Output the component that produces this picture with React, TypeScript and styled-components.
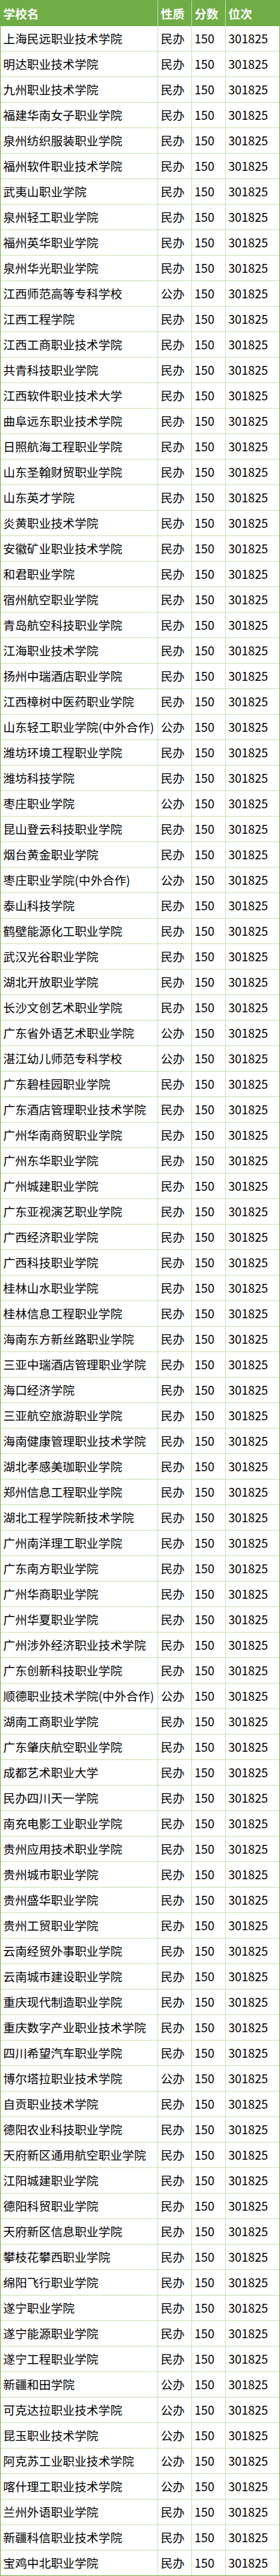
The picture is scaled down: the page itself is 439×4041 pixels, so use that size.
import React from "react";
import styled, { createGlobalStyle } from "styled-components";

const GlobalStyle = createGlobalStyle`
  html, body {
    margin: 0;
    padding: 0;
    background: #fff;
  }
  body {
    font-family: "Noto Sans CJK SC", "Noto Sans", sans-serif;
  }
`;

// 학교명 / 성질 목록 (점수, 순위는 모두 동일)
const SCHOOLS: [string, string][] = [
  ["上海民远职业技术学院", "民办"],
  ["明达职业技术学院", "民办"],
  ["九州职业技术学院", "民办"],
  ["福建华南女子职业学院", "民办"],
  ["泉州纺织服装职业学院", "民办"],
  ["福州软件职业技术学院", "民办"],
  ["武夷山职业学院", "民办"],
  ["泉州轻工职业学院", "民办"],
  ["福州英华职业学院", "民办"],
  ["泉州华光职业学院", "民办"],
  ["江西师范高等专科学校", "公办"],
  ["江西工程学院", "民办"],
  ["江西工商职业技术学院", "民办"],
  ["共青科技职业学院", "民办"],
  ["江西软件职业技术大学", "民办"],
  ["曲阜远东职业技术学院", "民办"],
  ["日照航海工程职业学院", "民办"],
  ["山东圣翰财贸职业学院", "民办"],
  ["山东英才学院", "民办"],
  ["炎黄职业技术学院", "民办"],
  ["安徽矿业职业技术学院", "民办"],
  ["和君职业学院", "民办"],
  ["宿州航空职业学院", "民办"],
  ["青岛航空科技职业学院", "民办"],
  ["江海职业技术学院", "民办"],
  ["扬州中瑞酒店职业学院", "民办"],
  ["江西樟树中医药职业学院", "民办"],
  ["山东轻工职业学院(中外合作)", "公办"],
  ["潍坊环境工程职业学院", "民办"],
  ["潍坊科技学院", "民办"],
  ["枣庄职业学院", "公办"],
  ["昆山登云科技职业学院", "民办"],
  ["烟台黄金职业学院", "民办"],
  ["枣庄职业学院(中外合作)", "公办"],
  ["泰山科技学院", "民办"],
  ["鹤壁能源化工职业学院", "民办"],
  ["武汉光谷职业学院", "民办"],
  ["湖北开放职业学院", "民办"],
  ["长沙文创艺术职业学院", "民办"],
  ["广东省外语艺术职业学院", "公办"],
  ["湛江幼儿师范专科学校", "公办"],
  ["广东碧桂园职业学院", "民办"],
  ["广东酒店管理职业技术学院", "民办"],
  ["广州华南商贸职业学院", "民办"],
  ["广州东华职业学院", "民办"],
  ["广州城建职业学院", "民办"],
  ["广东亚视演艺职业学院", "民办"],
  ["广西经济职业学院", "民办"],
  ["广西科技职业学院", "民办"],
  ["桂林山水职业学院", "民办"],
  ["桂林信息工程职业学院", "民办"],
  ["海南东方新丝路职业学院", "民办"],
  ["三亚中瑞酒店管理职业学院", "民办"],
  ["海口经济学院", "民办"],
  ["三亚航空旅游职业学院", "民办"],
  ["海南健康管理职业技术学院", "民办"],
  ["湖北孝感美珈职业学院", "民办"],
  ["郑州信息工程职业学院", "民办"],
  ["湖北工程学院新技术学院", "民办"],
  ["广州南洋理工职业学院", "民办"],
  ["广东南方职业学院", "民办"],
  ["广州华商职业学院", "民办"],
  ["广州华夏职业学院", "民办"],
  ["广州涉外经济职业技术学院", "民办"],
  ["广东创新科技职业学院", "民办"],
  ["顺德职业技术学院(中外合作)", "公办"],
  ["湖南工商职业学院", "民办"],
  ["广东肇庆航空职业学院", "民办"],
  ["成都艺术职业大学", "民办"],
  ["民办四川天一学院", "民办"],
  ["南充电影工业职业学院", "民办"],
  ["贵州应用技术职业学院", "民办"],
  ["贵州城市职业学院", "民办"],
  ["贵州盛华职业学院", "民办"],
  ["贵州工贸职业学院", "民办"],
  ["云南经贸外事职业学院", "民办"],
  ["云南城市建设职业学院", "民办"],
  ["重庆现代制造职业学院", "民办"],
  ["重庆数字产业职业技术学院", "民办"],
  ["四川希望汽车职业学院", "民办"],
  ["博尔塔拉职业技术学院", "公办"],
  ["自贡职业技术学院", "民办"],
  ["德阳农业科技职业学院", "民办"],
  ["天府新区通用航空职业学院", "民办"],
  ["江阳城建职业学院", "民办"],
  ["德阳科贸职业学院", "民办"],
  ["天府新区信息职业学院", "民办"],
  ["攀枝花攀西职业学院", "民办"],
  ["绵阳飞行职业学院", "民办"],
  ["遂宁职业学院", "民办"],
  ["遂宁能源职业学院", "民办"],
  ["遂宁工程职业学院", "民办"],
  ["新疆和田学院", "公办"],
  ["可克达拉职业技术学院", "公办"],
  ["昆玉职业技术学院", "公办"],
  ["阿克苏工业职业技术学院", "公办"],
  ["喀什理工职业技术学院", "公办"],
  ["兰州外语职业学院", "民办"],
  ["新疆科信职业技术学院", "民办"],
  ["宝鸡中北职业学院", "民办"],
];

const HEADERS = ["学校名", "性质", "分数", "位次"];
const SCORE = "150";
const RANK = "301825";

const Table = styled.div`
  box-sizing: border-box;
  width: 439px;
  border: 1px solid #70ad47;
  background: #fff;
`;

const Row = styled.div<{ $head?: boolean }>`
  display: grid;
  grid-template-columns: 247px 53px 53px 84px;
  box-sizing: border-box;
  height: ${({ $head }) => ($head ? "40px" : "40px")};
  background: ${({ $head }) => ($head ? "#70ad47" : "#fff")};
  border-bottom: ${({ $head }) => ($head ? "none" : "1px solid #c6e0b4")};
  &:last-child {
    height: 39px;
    border-bottom: none;
  }
`;

const Cell = styled.div<{ $head?: boolean }>`
  box-sizing: border-box;
  display: flex;
  align-items: center;
  padding-left: 4px;
  border-right: 1px solid #c6e0b4;
  white-space: nowrap;
  overflow: hidden;
  font-size: 18.67px;
  line-height: 1;
  font-weight: ${({ $head }) => ($head ? 700 : 400)};
  color: ${({ $head }) => ($head ? "#fff" : "#000")};
  &:last-child {
    border-right: none;
  }
`;

export default function App() {
  return (
    <>
      <GlobalStyle />
      <Table>
        <Row $head>
          {HEADERS.map((h) => (
            <Cell key={h} $head>
              {h}
            </Cell>
          ))}
        </Row>
        {SCHOOLS.map(([name, kind], i) => (
          <Row key={i}>
            <Cell>{name}</Cell>
            <Cell>{kind}</Cell>
            <Cell>{SCORE}</Cell>
            <Cell>{RANK}</Cell>
          </Row>
        ))}
      </Table>
    </>
  );
}
